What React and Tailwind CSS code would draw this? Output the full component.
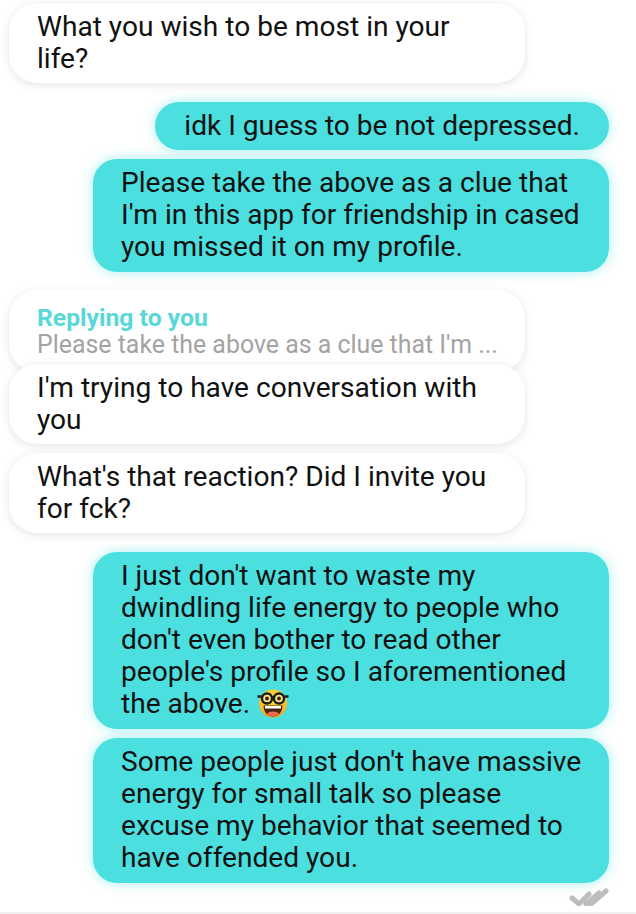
function Lines({ lines }) {
  return lines.map((line, i) => <div key={i}>{line}</div>);
}

function NerdFace() {
  return (
    <svg viewBox="0 0 32 32" className="inline-block w-[32px] h-[32px] align-[-7px]">
      <defs>
        <radialGradient id="cara" cx="50%" cy="35%" r="65%">
          <stop offset="0%" stopColor="#fde047" />
          <stop offset="75%" stopColor="#fbc02d" />
          <stop offset="100%" stopColor="#f59e0b" />
        </radialGradient>
      </defs>
      <circle cx="16" cy="15.500" r="14" fill="url(#cara)" />
      <path d="M6.500 17.500h19c0 7-4.500 11-9.500 11s-9.500-4-9.500-11z" fill="#4a2412" />
      <path d="M8 18h16v2.500H8z" fill="#fff" />
      <path d="M10 26c2-3.200 10-3.200 12 0-3 3-9 3-12 0z" fill="#ee6a52" />
      <circle cx="10" cy="10.500" r="5" fill="#fde68a" stroke="#201c18" strokeWidth="2.400" />
      <circle cx="22" cy="10.500" r="5" fill="#fde68a" stroke="#201c18" strokeWidth="2.400" />
      <path d="M0.500 8.500h4M27.500 8.500h4M15 9.500h2" stroke="#201c18" strokeWidth="2.400" />
      <circle cx="10" cy="10.500" r="2" fill="#3b2a1a" />
      <circle cx="22" cy="10.500" r="2" fill="#3b2a1a" />
    </svg>
  );
}

function Izquierda({ children, extra = "" }) {
  return (
    <div className={`relative shrink-0 w-[516px] ml-[9px] bg-white rounded-[28px] pl-[28px] pr-[20px] py-[8px] shadow-[0_2px_10px_rgba(0,0,0,0.11)] ${extra}`}>
      {children}
    </div>
  );
}

function Derecha({ children, extra = "" }) {
  return (
    <div className={`shrink-0 self-end mr-[27px] bg-[#4bdfe0] rounded-[24px] pl-[28px] pr-[24px] py-[8px] shadow-[0_0_12px_rgba(75,223,224,0.5)] ${extra}`}>
      {children}
    </div>
  );
}

export default function App() {
  return (
    <div className="w-[636px] h-[914px] overflow-hidden bg-white relative flex flex-col pt-[3px] text-[#111] text-[28.1px] leading-[32px] font-['Roboto',sans-serif]">
      <Izquierda>
        <Lines lines={["What you wish to be most in your", "life?"]} />
      </Izquierda>

      <Derecha extra="mt-[19px] pl-[29px] pr-[29px]">idk I guess to be not depressed.</Derecha>
      <Derecha extra="mt-[9px] w-[516px] pb-[9px]">
        <Lines lines={["Please take the above as a clue that", "I'm in this app for friendship in cased", "you missed it on my profile."]} />
      </Derecha>

      <Izquierda extra="mt-[18px] pt-[14px] h-[82px]">
        <div className="text-[24.7px] leading-[28px] font-bold text-[#58d8d8]">Replying to you</div>
        <div className="text-[24.9px] leading-[26px] text-[#a3a3a3]">Please take the above as a clue that I'm ...</div>
      </Izquierda>
      <Izquierda extra="-mt-[8px]">
        <Lines lines={["I'm trying to have conversation with", "you"]} />
      </Izquierda>
      <Izquierda extra="mt-[9px]">
        <Lines lines={["What's that reaction? Did I invite you", "for fck?"]} />
      </Izquierda>

      <Derecha extra="mt-[19px] w-[516px] pb-[9px]">
        <Lines lines={["I just don't want to waste my", "dwindling life energy to people who", "don't even bother to read other", "people's profile so I aforementioned"]} />
        <div>the above. <NerdFace /></div>
      </Derecha>
      <Derecha extra="mt-[9px] w-[516px] pb-[9px]">
        <Lines lines={["Some people just don't have massive", "energy for small talk so please", "excuse my behavior that seemed to", "have offended you."]} />
      </Derecha>

      <svg viewBox="0 0 40 18" className="absolute left-[569px] top-[888px] w-[40px] h-[18px]">
        <path d="M3 10l7 6M10 16L20 6M17 16L30 5M22 16L37 3" fill="none" stroke="#bdbdbd" strokeWidth="5" strokeLinecap="round" />
      </svg>
      <div className="absolute left-0 right-0 bottom-0 h-[2px] bg-[#f0f0f0]" />
    </div>
  );
}
